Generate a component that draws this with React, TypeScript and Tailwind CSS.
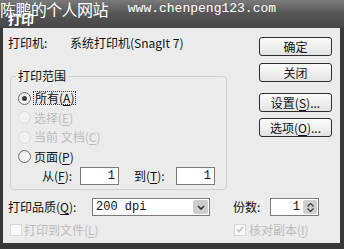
import type { ReactNode } from 'react'

const font = "font-['Noto_Sans_CJK_SC','Noto_Sans_CJK_JP',sans-serif]"

function Key({ k }: { k: string }) {
  return (
    <span>
      (<span className="underline underline-offset-2">{k}</span>)
    </span>
  )
}

function Button({ children, className = '' }: { children: ReactNode; className?: string }) {
  return (
    <div
      className={`h-[19px] w-[73px] rounded-[3px] border border-[#2e2e2e] bg-gradient-to-b from-[#fdfdfd] to-[#e2e2e2] flex items-center justify-center text-[12px] leading-[12px] text-[#111] ${className}`}
    >
      {children}
    </div>
  )
}

function Radio({ checked, disabled }: { checked?: boolean; disabled?: boolean }) {
  return (
    <div
      className={`w-[13px] h-[13px] rounded-full border flex items-center justify-center ${
        disabled ? 'border-[#dadada] bg-[#f0f0f0]' : 'border-[#6a6a6a] bg-gradient-to-br from-[#e4e4e4] to-white'
      }`}
    >
      {checked && <div className="w-[5px] h-[5px] rounded-full bg-[#3a3a3a]" />}
    </div>
  )
}

function NumBox({ width, spin }: { width: string; spin?: boolean }) {
  return (
    <div className={`${width} h-[18px] border border-[#7a7a7a] bg-white flex items-center justify-end`}>
      <span className="pr-[3px] text-[12px] leading-[12px] font-['Liberation_Mono',monospace]">1</span>
      {spin && (
        <div className="w-[14px] h-[14px] mr-[1px] bg-[#cfcfcf] rounded-[2px] flex flex-col items-center justify-center gap-[1px]">
          <svg width="7" height="4" viewBox="0 0 7 4">
            <path d="M0.5 3.5 L3.5 0.5 L6.5 3.5" fill="none" stroke="#444" strokeWidth="1.4" />
          </svg>
          <svg width="7" height="4" viewBox="0 0 7 4">
            <path d="M0.5 0.5 L3.5 3.5 L6.5 0.5" fill="none" stroke="#444" strokeWidth="1.4" />
          </svg>
        </div>
      )}
    </div>
  )
}

function App() {
  return (
    <div className={`w-[344px] h-[249px] bg-[#383838] flex flex-col overflow-hidden relative ${font}`}>
      {/* title bar */}
      <div className="h-[28px] bg-gradient-to-b from-[#7a7a7a] via-[#555] to-[#474747] flex items-center pl-[8px] pt-[8px]">
        <span className="text-white font-bold text-[13px] leading-[13px]">打印</span>
      </div>

      {/* watermark over the title bar */}
      <div className="absolute left-0 top-0 flex items-center text-white">
        <span className="text-[16px] leading-[18px] tracking-[-0.6px]">陈鹏的个人网站</span>
        <span className="ml-[20px] text-[13px] leading-[18px] font-['Liberation_Mono',monospace]">
          www.chenpeng123.com
        </span>
      </div>

      {/* body */}
      <div className="ml-[3px] w-[337px] h-[215px] bg-[#ebebeb] pl-[5px] text-[12px] leading-[12px] text-[#111]">
        <div className="flex">
          <div className="w-[219px]">
            <div className="mt-[9px] h-[12px] flex">
              <span className="w-[62px]">打印机:</span>
              <span>系统打印机(SnagIt 7)</span>
            </div>

            <fieldset className="ml-[2px] mt-[21px] w-[217px] border border-[#cfcfcf] rounded-[4px] px-[7px] pb-[3px]">
              <legend className="ml-[-2px] px-[2px] text-[12px] leading-[12px]">打印范围</legend>
              <div className="pt-[6px]">
                <div className="h-[20px] flex items-center gap-[3px]">
                  <Radio checked />
                  <span className="outline-1 outline-dotted outline-[#333] px-[1px]">
                    所有<Key k="A" />
                  </span>
                </div>
                <div className="h-[19px] flex items-center gap-[3px] text-[#bdbdbd]">
                  <Radio disabled />
                  <span>
                    选择<Key k="E" />
                  </span>
                </div>
                <div className="h-[20px] flex items-center gap-[3px] text-[#bdbdbd]">
                  <Radio disabled />
                  <span>
                    当前 文档<Key k="C" />
                  </span>
                </div>
                <div className="h-[19px] flex items-center gap-[3px]">
                  <Radio />
                  <span>
                    页面<Key k="P" />
                  </span>
                </div>
                <div className="h-[20px] flex items-center">
                  <span className="ml-[24px] w-[38px]">
                    从<Key k="F" />:
                  </span>
                  <NumBox width="w-[39px]" />
                  <span className="ml-[15px] w-[42px]">
                    到<Key k="T" />:
                  </span>
                  <NumBox width="w-[39px]" />
                </div>
              </div>
            </fieldset>
          </div>

          <div className="ml-[32px] flex flex-col">
            <Button className="mt-[9px]">确定</Button>
            <Button className="mt-[7px]">关闭</Button>
            <Button className="mt-[11px]">
              设置<Key k="S" />...
            </Button>
            <Button className="mt-[6px]">
              选项<Key k="O" />...
            </Button>
          </div>
        </div>

        <div className="mt-[8px] h-[18px] flex items-center">
          <span className="w-[84px]">
            打印品质<Key k="Q" />:
          </span>
          <div className="w-[118px] h-[18px] border border-[#7a7a7a] bg-white flex items-center justify-between pl-[3px] pr-[1px]">
            <span className="font-['Liberation_Mono',monospace]">200 dpi</span>
            <div className="w-[15px] h-[14px] bg-[#cdcdcd] rounded-[2px] flex items-center justify-center">
              <svg width="8" height="5" viewBox="0 0 8 5">
                <path d="M1 1 L4 4 L7 1" fill="none" stroke="#333" strokeWidth="1.6" />
              </svg>
            </div>
          </div>
          <span className="ml-[23px] w-[37px]">份数:</span>
          <NumBox width="w-[49px]" spin />
        </div>

        <div className="mt-[7px] h-[13px] flex items-center text-[#bdbdbd]">
          <div className="ml-[2px] w-[12px] h-[12px] border border-[#d6d6d6] bg-[#f7f7f7]" />
          <span className="ml-[2px] w-[210px]">
            打印到文件<Key k="L" />
          </span>
          <div className="w-[12px] h-[12px] border border-[#d6d6d6] bg-[#f7f7f7] flex items-center justify-center">
            <svg width="8" height="7" viewBox="0 0 8 7">
              <path d="M1 3.5 L3 5.5 L7 1" fill="none" stroke="#c4c4c4" strokeWidth="1.6" />
            </svg>
          </div>
          <span className="ml-[3px]">
            核对副本<Key k="I" />
          </span>
        </div>
      </div>
    </div>
  )
}

export default App
